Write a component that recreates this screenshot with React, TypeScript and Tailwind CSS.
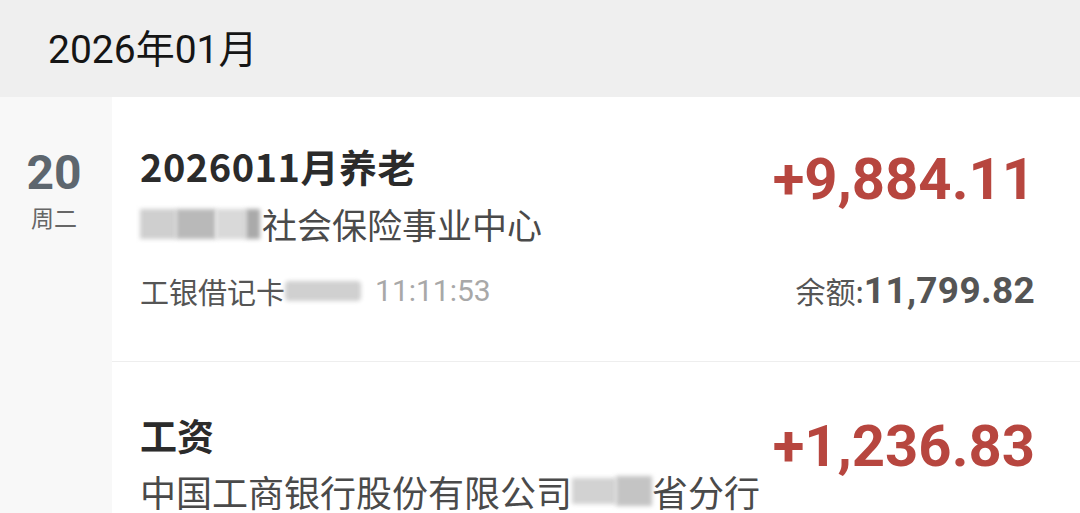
import React from "react";

const cjk = { fontFamily: '"Noto Sans CJK SC", "Noto Sans", sans-serif' };
const num = { fontFamily: 'Roboto, "Noto Sans CJK SC", sans-serif' };

function Blur({ w, h, tone = "bg-[#c8c8c8]", className = "" }: { w: string; h: string; tone?: string; className?: string }) {
  return <span className={`inline-block align-middle ${w} ${h} ${tone} blur-[2px] ${className}`} />;
}

export default function App() {
  return (
    <div className="w-[1080px] h-[513px] overflow-hidden bg-white" style={cjk}>
      <div className="h-[97px] bg-[#efefef] flex items-center pl-[48px]">
        <span className="text-[39px] text-[#151515] leading-none" style={num}>
          2026<span style={cjk}>年</span>01<span style={cjk}>月</span>
        </span>
      </div>
      <div className="flex">
        <div className="w-[112px] bg-[#f8f8f8] h-[416px] flex flex-col items-center pt-[50px] pr-[4px]">
          <div className="text-[48px] font-bold text-[#5d666e] leading-[52px]" style={num}>20</div>
          <div className="text-[23px] text-[#666] leading-[30px] mt-[3px]">周二</div>
        </div>
        <div className="flex-1 bg-white">
          {/* item 1 */}
          <div className="h-[265px] pl-[28px] pr-[45px] border-b border-[#eeeeee] flex flex-col">
            <div className="flex justify-between">
              <div className="pt-[46px]">
                <div className="text-[38px] font-bold text-[#2b2b2b] leading-[46px] tracking-[0.5px]">2026011月养老</div>
                <div className="text-[35px] text-[#4a4a4a] leading-[46px] mt-[12px] flex items-center">
                  <Blur w="w-[36px]" h="h-[30px]" tone="bg-[#cfcfcf]" />
                  <Blur w="w-[40px]" h="h-[30px]" tone="bg-[#b9b9b9]" />
                  <Blur w="w-[30px]" h="h-[30px]" tone="bg-[#d9d9d9]" />
                  <Blur w="w-[14px]" h="h-[30px]" tone="bg-[#aaaaaa]" className="mr-[2px]" />
                  <span>社会保险事业中心</span>
                </div>
              </div>
              <div className="pt-[50px] text-[58px] font-bold text-[#b7463f] leading-[64px]" style={num}>+9,884.11</div>
            </div>
            <div className="flex justify-between items-center mt-[24px] h-[40px]">
              <div className="flex items-center text-[29px] text-[#555] leading-[40px]">
                <span>工银借记卡</span>
                <Blur w="w-[76px]" h="h-[20px]" tone="bg-[#d0d0d0]" className="rounded-sm" />
                <span className="ml-[14px] text-[#a8a8a8] text-[30px]" style={num}>11:11:53</span>
              </div>
              <div className="flex items-baseline text-[#555]">
                <span className="text-[30px]">余额:</span>
                <span className="text-[37px] font-bold tracking-[0.3px]" style={num}>11,799.82</span>
              </div>
            </div>
          </div>
          {/* item 2 */}
          <div className="pl-[28px] pr-[45px] flex justify-between h-[150px]">
            <div className="pt-[50px]">
              <div className="text-[37px] font-bold text-[#2b2b2b] leading-[46px]">工资</div>
              <div className="text-[36px] text-[#4a4a4a] leading-[38px] mt-[14px] flex items-center whitespace-nowrap">
                <span className="leading-[38px]">中国工商银行股份有限公司</span>
                <Blur w="w-[44px]" h="h-[26px]" tone="bg-[#d2d2d2]" />
                <Blur w="w-[36px]" h="h-[30px]" tone="bg-[#c4c4c4]" />
                <span className="leading-[38px]">省分行</span>
              </div>
            </div>
            <div className="pt-[52px] text-[58px] font-bold text-[#b7463f] leading-[64px]" style={num}>+1,236.83</div>
          </div>
        </div>
      </div>
    </div>
  );
}
